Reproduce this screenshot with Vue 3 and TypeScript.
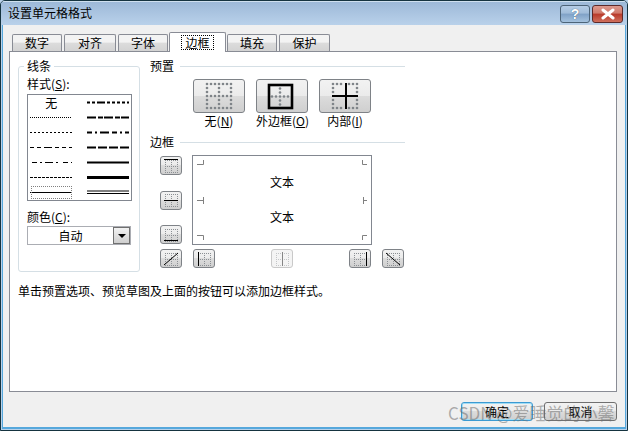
<template>
  <div class="window">
    <div class="titlebar">
      <span>设置单元格格式</span>
      <div class="caption">
        <div class="cap help">?</div>
        <div class="cap close">
          <svg width="20" height="12" viewBox="0 0 20 12">
            <path d="M5 2 L15 10 M15 2 L5 10" stroke="#fff" stroke-width="3" stroke-linecap="round" />
          </svg>
        </div>
      </div>
    </div>

    <div class="client">
      <div class="tabs">
        <div
          v-for="t in tabs"
          :key="t.name"
          class="tab"
          :class="{ active: t.active }"
          :style="{ width: t.width + 'px' }"
        >
          <span>{{ t.name }}</span>
        </div>
      </div>

      <div class="panel">
        <div class="columns">
          <div class="lines-group">
            <div class="group-title">线条</div>
            <div class="label">样式(<u>S</u>):</div>
            <div class="style-list">
              <div v-for="(s, i) in lineStyles" :key="i" class="style-cell" :class="{ focused: s.focused }">
                <span v-if="s.none">无</span>
                <svg v-else width="42" height="5" viewBox="0 0 42 5">
                  <template v-if="s.double">
                    <line x1="0" y1="1" x2="42" y2="1" stroke="#000" />
                    <line x1="0" y1="3.5" x2="42" y2="3.5" stroke="#000" />
                  </template>
                  <line
                    v-else
                    x1="0"
                    y1="2.5"
                    x2="42"
                    y2="2.5"
                    stroke="#000"
                    :stroke-width="s.w"
                    :stroke-dasharray="s.dash"
                  />
                </svg>
              </div>
            </div>
            <div class="label color-label">颜色(<u>C</u>):</div>
            <div class="combo">
              <span class="combo-value">自动</span>
              <div class="combo-arrow"><i></i></div>
            </div>
          </div>

          <div class="right">
            <div class="heading"><span>预置</span><i></i></div>
            <div class="presets">
              <div v-for="p in presets" :key="p.name" class="preset">
                <div class="btn big">
                  <svg width="40" height="30" viewBox="0 0 40 30">
                    <g fill="#7f8489">
                      <circle v-for="d in p.dots" :key="d[0] + '-' + d[1]" :cx="d[0]" :cy="d[1]" r="1.3" />
                    </g>
                    <rect v-if="p.outer" x="7" y="4" width="23" height="23" fill="none" stroke="#000" stroke-width="2.6" />
                    <path v-if="p.inner" d="M7 15 H33 M21 2 V28" stroke="#000" stroke-width="2" fill="none" />
                  </svg>
                </div>
                <div class="preset-name">{{ p.name }}(<u>{{ p.key }}</u>)</div>
              </div>
            </div>

            <div class="heading border-heading"><span>边框</span><i></i></div>
            <div class="editor">
              <div class="side-btns">
                <div v-for="b in sideBtns" :key="b" class="btn small">
                  <svg width="16" height="14" viewBox="0 0 16 14">
                    <g fill="#8b8f93">
                      <rect v-for="d in smallDots" :key="d[0] + '-' + d[1]" :x="d[0]" :y="d[1]" width="1" height="1" />
                    </g>
                    <path :d="b" stroke="#000" fill="none" />
                  </svg>
                </div>
              </div>

              <div class="preview">
                <svg class="marks" width="178" height="88" viewBox="0 0 178 88">
                  <path
                    d="M4 8.5 H10.5 V4 M4 44.5 H10 M10.5 41 V48 M4 79.5 H10.5 V84 M169.5 4 V8.5 H174 M170.5 41 V48 M170.5 44.5 H174 M174 79.5 H169.5 V84"
                    stroke="#808080"
                    fill="none"
                  />
                </svg>
                <span>文本</span>
                <span>文本</span>
              </div>

              <div class="btn small diag-left">
                <svg width="16" height="14" viewBox="0 0 16 14">
                  <g fill="#8b8f93">
                    <rect v-for="d in smallDots" :key="d[0] + '-' + d[1]" :x="d[0]" :y="d[1]" width="1" height="1" />
                  </g>
                  <path d="M1 13 L15 1" stroke="#000" fill="none" />
                </svg>
              </div>

              <div class="bottom-btns">
                <div
                  v-for="b in bottomBtns"
                  :key="b.d"
                  class="btn small"
                  :class="{ disabled: b.disabled }"
                >
                  <svg width="16" height="14" viewBox="0 0 16 14">
                    <g fill="#8b8f93">
                      <rect v-for="d in smallDots" :key="d[0] + '-' + d[1]" :x="d[0]" :y="d[1]" width="1" height="1" />
                    </g>
                    <path :d="b.d" stroke="#000" fill="none" />
                  </svg>
                </div>
              </div>

              <div class="btn small diag-right">
                <svg width="16" height="14" viewBox="0 0 16 14">
                  <g fill="#8b8f93">
                    <rect v-for="d in smallDots" :key="d[0] + '-' + d[1]" :x="d[0]" :y="d[1]" width="1" height="1" />
                  </g>
                  <path d="M1 1 L15 13" stroke="#000" fill="none" />
                </svg>
              </div>
            </div>
          </div>
        </div>

        <div class="note">单击预置选项、预览草图及上面的按钮可以添加边框样式。</div>
      </div>

      <div class="footer">
        <div class="push ok">确定</div>
        <div class="push">取消</div>
      </div>
    </div>

    <div class="watermark">CSDN @爱睡觉的小馨</div>
  </div>
</template>

<script setup lang="ts">
interface LineStyle {
  none?: boolean;
  double?: boolean;
  focused?: boolean;
  w?: number;
  dash?: string;
}

const tabs = [
  { name: "数字", width: 50 },
  { name: "对齐", width: 52 },
  { name: "字体", width: 50 },
  { name: "边框", width: 57, active: true },
  { name: "填充", width: 50 },
  { name: "保护", width: 51 },
];

// left cell, right cell, row by row
const lineStyles: LineStyle[] = [
  { none: true },
  { w: 2, dash: "3 2 3 2 8 2 3 2 3 2 3 2" },
  { w: 1, dash: "1 1" },
  { w: 2, dash: "9 2 5 1" },
  { w: 1, dash: "2 2" },
  { w: 2, dash: "5 3 2 3 9 3" },
  { w: 1, dash: "4 3 4 3 8 3" },
  { w: 2, dash: "9 2" },
  { w: 1, dash: "0 2 5 3 2 3 8 3 2 3" },
  { w: 2 },
  { w: 1, dash: "3 1" },
  { w: 3 },
  { w: 1, focused: true },
  { double: true },
];

function gridDots(xs: number[], ys: number[]): number[][] {
  const out: number[][] = [];
  ys.forEach((y) => xs.forEach((x) => out.push([x, y])));
  return out;
}

// 7 x 7 dot grid of the preset icons, 4px apart
const col = [8, 12, 16, 20, 24, 28, 32];
const row = [3, 7, 11, 15, 19, 23, 27];

const allDots = [
  ...gridDots(col, [row[0], row[3], row[6]]),
  ...gridDots([col[0], col[3], col[6]], [row[1], row[2], row[4], row[5]]),
];

const presets = [
  { name: "无", key: "N", dots: allDots },
  {
    name: "外边框",
    key: "O",
    outer: true,
    dots: [
      ...gridDots([10, 14, 18, 22, 26], [15.5]),
      ...gridDots([18], [7.5, 11.5, 19.5, 23.5]),
    ],
  },
  {
    name: "内部",
    key: "I",
    inner: true,
    dots: allDots.filter((d) => d[0] !== col[3] && d[1] !== row[3]),
  },
];

const smallDots = [
  ...gridDots([2, 4, 6, 8, 10, 12, 14], [1, 7, 13]),
  ...gridDots([2, 8, 14], [3, 5, 9, 11]),
];

const sideBtns = ["M1 0.5 H15", "M1 7.5 H15", "M1 12.5 H15"];

const bottomBtns = [
  { d: "M2.5 0 V14" },
  { d: "M8.5 0 V14", disabled: true },
  { d: "M14.5 0 V14" },
];
</script>

<style>
html,
body {
  margin: 0;
  background: #b9d1ea;
}
</style>

<style scoped>
.window {
  position: relative;
  width: 628px;
  height: 431px;
  box-sizing: border-box;
  display: flex;
  flex-direction: column;
  overflow: hidden;
  background: #b9d1ea;
  border: 1px solid #15333f;
  border-radius: 5px 5px 0 0;
  font-family: "Noto Sans CJK SC", "Liberation Sans", sans-serif;
  font-size: 12px;
  line-height: 14px;
  color: #000;
}

.titlebar {
  height: 24px;
  flex: none;
  display: flex;
  align-items: center;
  justify-content: space-between;
  padding: 0 0 1px 7px;
  box-sizing: border-box;
  background: linear-gradient(#9db9d8, #b9d1ea);
  border-top: 1px solid #cfe0ef;
}

.caption {
  display: flex;
  gap: 2px;
  align-self: flex-start;
  margin: 3px 4px 0 0;
}

.cap {
  height: 18px;
  box-sizing: border-box;
  border: 1px solid #4d6478;
  border-radius: 3px;
  display: flex;
  align-items: center;
  justify-content: center;
  color: #fff;
  font: bold 14px "Liberation Sans", sans-serif;
}

.help {
  width: 30px;
  background: linear-gradient(#b5cde6 0, #a0bcd9 45%, #7fa1c6 50%, #a5c2de 100%);
  text-shadow: 0 0 1px #24425f;
}

.close {
  width: 31px;
  border-color: #5c2a2a;
  background: linear-gradient(#dd9a8e 0, #cf7a6c 45%, #b8392a 50%, #cf6f5c 100%);
}

.client {
  flex: 1;
  display: flex;
  flex-direction: column;
  margin: 0 1px 1px;
  background: #f0f0f0;
  border: solid #56a8dc;
  border-width: 0 1px 2px;
  padding: 7px 0 0 6px;
}

.tabs {
  display: flex;
  gap: 2px;
  height: 19px;
  padding-left: 3px;
  align-items: flex-end;
}

.tab {
  height: 17px;
  box-sizing: border-box;
  border: 1px solid #898c95;
  border-bottom: none;
  border-radius: 2px 2px 0 0;
  background: linear-gradient(#f3f3f3, #f3f3f3 45%, #dcdcdc 50%, #d3d3d3);
  text-align: center;
  line-height: 16px;
}

.tab.active {
  height: 20px;
  margin: 0 -1px -1px;
  background: #fff;
  position: relative;
  z-index: 1;
  padding-top: 2px;
}

.tab.active span {
  display: inline-block;
  outline: 1px dotted #000;
  padding: 0 3px;
  line-height: 13px;
}

.panel {
  width: 608px;
  height: 341px;
  box-sizing: border-box;
  background: #fff;
  border: 1px solid #898c95;
  padding: 7px 0 0 8px;
}

.columns {
  display: flex;
  gap: 10px;
  align-items: flex-start;
}

.lines-group {
  width: 122px;
  height: 206px;
  box-sizing: border-box;
  margin-top: 7px;
  padding: 0 8px;
  border: 1px solid #d5dfe5;
  border-radius: 3px;
}

.group-title {
  width: max-content;
  margin: -8px 0 0 -3px;
  padding: 0 3px;
  background: #fff;
}

.label {
  margin-top: 4px;
  height: 17px;
  line-height: 14px;
}

.style-list {
  width: 105px;
  height: 107px;
  box-sizing: border-box;
  border: 1px solid #828790;
  display: grid;
  grid-template-columns: 1fr 1fr;
  grid-auto-rows: 15px;
  padding: 0 2px;
  column-gap: 14px;
}

.style-cell {
  display: flex;
  align-items: center;
  justify-content: center;
}

.style-cell.focused {
  outline: 1px dotted #808080;
  outline-offset: -2px;
}

.color-label {
  margin-top: 9px;
  height: 16px;
}

.combo {
  width: 104px;
  height: 19px;
  box-sizing: border-box;
  border: 1px solid #abadb3;
  display: flex;
}

.combo-value {
  flex: 1;
  text-align: center;
  line-height: 17px;
}

.combo-arrow {
  width: 17px;
  box-sizing: border-box;
  border: 1px solid #707070;
  background: linear-gradient(#f2f2f2, #cfcfcf);
  display: flex;
  align-items: center;
  justify-content: center;
}

.combo-arrow i {
  border: 4px solid transparent;
  border-top: 4px solid #000;
  border-bottom: none;
}

.right {
  width: 255px;
}

.heading {
  display: flex;
  align-items: center;
  gap: 6px;
}

.heading i {
  flex: 1;
  height: 1px;
  background: #d5dfe5;
}

.border-heading {
  margin-top: 7px;
}

.presets {
  display: flex;
  gap: 11px;
  margin: 6px 0 0 43px;
}

.preset {
  width: 52px;
  text-align: center;
}

.preset-name {
  margin-top: 1px;
  white-space: nowrap;
}

.btn {
  box-sizing: border-box;
  border: 1px solid #7e8287;
  border-radius: 3px;
  background: linear-gradient(#f2f2f2, #ebebeb 49%, #dcdcdc 50%, #cfcfcf);
  display: flex;
  align-items: center;
  justify-content: center;
}

.btn.big {
  width: 52px;
  height: 34px;
}

.btn.small {
  width: 22px;
  height: 19px;
}

.btn.disabled {
  border-color: #c9c9c9;
  background: #f4f4f4;
}

.btn.disabled svg {
  opacity: 0.45;
}

.editor {
  display: grid;
  grid-template-columns: 22px 180px 22px;
  column-gap: 10px;
  row-gap: 4px;
  margin: 6px 0 0 10px;
}

.side-btns {
  display: flex;
  flex-direction: column;
  justify-content: space-between;
  padding: 1px 0;
}

.preview {
  position: relative;
  grid-column: 2;
  height: 90px;
  box-sizing: border-box;
  border: 1px solid #828790;
  padding-bottom: 2px;
  display: flex;
  flex-direction: column;
  align-items: center;
  justify-content: center;
  gap: 21px;
}

.marks {
  position: absolute;
  left: 0;
  top: 0;
}

.diag-left {
  grid-row: 2;
  grid-column: 1;
}

.diag-right {
  grid-row: 2;
  grid-column: 3;
}

.bottom-btns {
  grid-row: 2;
  grid-column: 2;
  display: flex;
  justify-content: space-between;
  padding: 0 1px;
}

.note {
  margin-top: 12px;
}

.footer {
  flex: 1;
  display: flex;
  justify-content: flex-end;
  align-items: flex-start;
  gap: 11px;
  padding: 10px 8px 0 0;
}

.push {
  width: 73px;
  height: 19px;
  box-sizing: border-box;
  border: 1px solid #707070;
  border-radius: 3px;
  background: linear-gradient(#f2f2f2, #ebebeb 49%, #dcdcdc 50%, #cfcfcf);
  text-align: center;
  line-height: 17px;
}

.push.ok {
  width: 72px;
  border-color: #3c9ad2;
  box-shadow: inset 0 0 0 1px #9fdcf5;
}

.watermark {
  position: absolute;
  left: 447px;
  top: 401px;
  font-size: 17px;
  line-height: 22px;
  color: rgba(110, 110, 110, 0.55);
  white-space: nowrap;
  pointer-events: none;
}
</style>
